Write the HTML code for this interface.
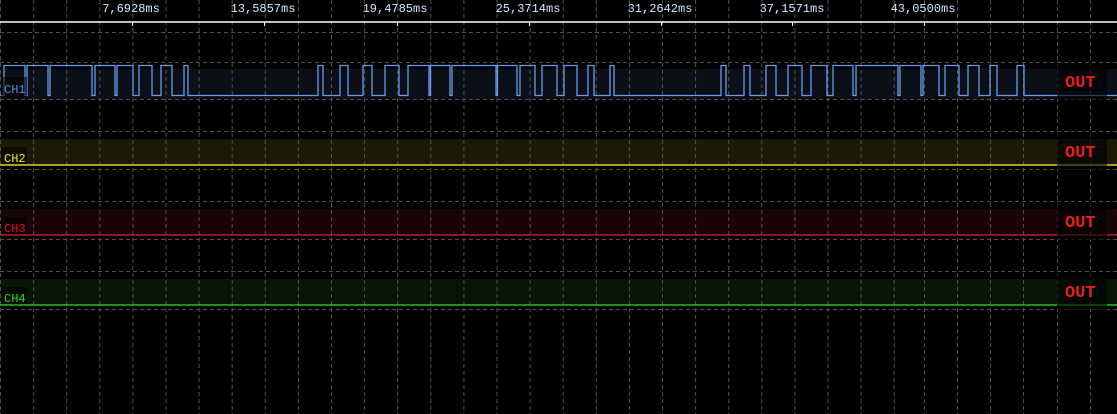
<!DOCTYPE html>
<html><head><style>
html,body{margin:0;padding:0;background:#000;width:1117px;height:414px;overflow:hidden}
svg{display:block}
</style></head><body>
<svg width="1117" height="414" viewBox="0 0 1117 414" xmlns="http://www.w3.org/2000/svg">
<rect width="1117" height="414" fill="#000"/>
<rect x="0" y="69" width="1117" height="30" fill="#0a0f18"/>
<rect x="0" y="139" width="1117" height="26" fill="#1a1a05"/>
<rect x="0" y="209" width="1117" height="26" fill="#190508"/>
<rect x="0" y="279" width="1117" height="26" fill="#061706"/>
<g stroke="#505050" stroke-width="1" stroke-dasharray="4,3" fill="none">
<path d="M0.5 0V414M33.6 0V414M66.7 0V414M99.8 0V414M132.9 0V414M166 0V414M199.1 0V414M232.2 0V414M265.3 0V414M298.4 0V414M331.5 0V414M364.6 0V414M397.7 0V414M430.8 0V414M463.9 0V414M497 0V414M530.1 0V414M563.2 0V414M596.3 0V414M629.4 0V414M662.5 0V414M695.6 0V414M728.7 0V414M761.8 0V414M794.9 0V414M828 0V414M861.1 0V414M894.2 0V414M924.5 0V414M957.5 0V414M990.5 0V414M1023.5 0V414M1057.5 0V414M1090.5 0V414"/>
<path d="M0 32.5H1117M0 62.5H1117M0 99.5H1117M0 131.5H1117M0 169.5H1117M0 201.5H1117M0 239.5H1117M0 271.5H1117M0 309.5H1117"/>
</g>
<line x1="0" y1="22" x2="1117" y2="22" stroke="#fff" stroke-width="1.5"/>
<g stroke="#fff" stroke-width="1">
<path d="M132.5 22V26M264.5 22V26M397.5 22V26M529.5 22V26M661.5 22V26M792.5 22V26M924.5 22V26"/>
</g>
<g font-family="Liberation Mono, monospace" font-size="12" fill="#d8e6ff" text-anchor="middle">
<text x="131" y="12">7,6928ms</text>
<text x="263" y="12">13,5857ms</text>
<text x="395" y="12">19,4785ms</text>
<text x="528" y="12">25,3714ms</text>
<text x="660" y="12">31,2642ms</text>
<text x="792" y="12">37,1571ms</text>
<text x="923" y="12">43,0500ms</text>
</g>
<polyline fill="none" stroke="#6b9be8" stroke-width="1.3" points="0,95.5 4,95.5 4,65.5 25,65.5 25,95.5 27,95.5 27,65.5 48,65.5 48,95.5 50,95.5 50,65.5 92,65.5 92,95.5 95,95.5 95,65.5 115,65.5 115,95.5 117,95.5 117,65.5 133,65.5 133,95.5 139,95.5 139,65.5 152,65.5 152,95.5 161,95.5 161,65.5 172,65.5 172,95.5 184,95.5 184,65.5 188,65.5 188,95.5 318,95.5 318,65.5 323,65.5 323,95.5 340,95.5 340,65.5 348,65.5 348,95.5 363,95.5 363,65.5 372,65.5 372,95.5 385,95.5 385,65.5 399,65.5 399,95.5 408,95.5 408,65.5 429,65.5 429,95.5 430.5,95.5 430.5,65.5 450,65.5 450,95.5 452,95.5 452,65.5 496,65.5 496,95.5 497.5,95.5 497.5,65.5 517,65.5 517,95.5 520,95.5 520,65.5 535,65.5 535,95.5 542,95.5 542,65.5 557,65.5 557,95.5 564,95.5 564,65.5 577,65.5 577,95.5 588,95.5 588,65.5 594,65.5 594,95.5 610,95.5 610,65.5 614,65.5 614,95.5 721,95.5 721,65.5 726,65.5 726,95.5 744,95.5 744,65.5 750,65.5 750,95.5 766,95.5 766,65.5 776,65.5 776,95.5 788,95.5 788,65.5 802,65.5 802,95.5 811,95.5 811,65.5 827,65.5 827,95.5 833,95.5 833,65.5 853,65.5 853,95.5 856,95.5 856,65.5 898,65.5 898,95.5 900,95.5 900,65.5 921,65.5 921,95.5 923,95.5 923,65.5 939,65.5 939,95.5 945,95.5 945,65.5 959,65.5 959,95.5 968,95.5 968,65.5 979,65.5 979,95.5 990,95.5 990,65.5 997,65.5 997,95.5 1017,95.5 1017,65.5 1024,65.5 1024,95.5 1117,95.5"/>
<line x1="0" y1="165" x2="1117" y2="165" stroke="#ffff30" stroke-width="1.3"/>
<line x1="0" y1="235" x2="1117" y2="235" stroke="#e02030" stroke-width="1.3"/>
<line x1="0" y1="305" x2="1117" y2="305" stroke="#30e030" stroke-width="1.3"/>
<g fill="#000" fill-opacity="0.6">
<rect x="1057" y="63" width="50" height="37"/>
<rect x="1057" y="133" width="50" height="37"/>
<rect x="1057" y="203" width="50" height="37"/>
<rect x="1057" y="273" width="50" height="37"/>
</g>
<g font-family="Liberation Mono, monospace" font-weight="bold" font-size="17" fill="#ee1a1a">
<text x="1065" y="87">OUT</text>
<text x="1065" y="157">OUT</text>
<text x="1065" y="227">OUT</text>
<text x="1065" y="297">OUT</text>
</g>
<g fill="#000" fill-opacity="0.55">
<rect x="1" y="77" width="26" height="21"/>
<rect x="1" y="147" width="26" height="17"/>
<rect x="1" y="217" width="26" height="17"/>
<rect x="1" y="287" width="26" height="17"/>
</g>
<g font-family="Liberation Mono, monospace" font-size="12">
<text x="4" y="93" fill="#5a8ad8">CH1</text>
<text x="4" y="162" fill="#e8e820">CH2</text>
<text x="4" y="232" fill="#e01020">CH3</text>
<text x="4" y="302" fill="#20e020">CH4</text>
</g>
</svg>
</body></html>
